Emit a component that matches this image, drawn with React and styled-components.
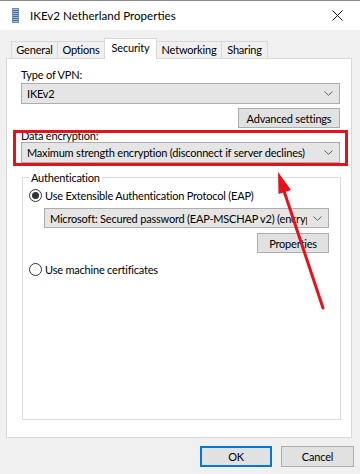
import React from "react";
import styled, { createGlobalStyle } from "styled-components";

const Global = createGlobalStyle`
  html, body { margin: 0; padding: 0; }
  body {
    background: #f0f0f0;
    font-family: Lato, "Noto Sans", sans-serif;
    font-size: 11px;
    letter-spacing: -0.2px;
    color: #000;
  }
`;

const Window = styled.div`
  position: relative;
  width: 360px;
  height: 474px;
  display: flex;
  flex-direction: column;
  background: #f0f0f0;
  overflow: hidden;
`;

const TitleBar = styled.div`
  height: 29px;
  border-top: 1px solid #8c8c8c;
  background: #fff;
  display: flex;
  align-items: center;
  padding-left: 12px;
  gap: 11px;
`;

const TitleText = styled.div`
  flex: 1;
  font-size: 11.6px;
  letter-spacing: 0;
  line-height: 16px;
`;

const CloseBtn = styled.div`
  width: 46px;
  height: 29px;
  display: flex;
  align-items: center;
  justify-content: center;
`;

const Body = styled.div`
  padding: 8px 8px 0 6px;
  display: flex;
  flex-direction: column;
`;

const TabStrip = styled.div`
  display: flex;
  align-items: flex-end;
  padding-left: 5px;
  position: relative;
  z-index: 1;
`;

const Tab = styled.div`
  box-sizing: border-box;
  width: ${(p) => p.$w}px;
  height: ${(p) => (p.$active ? 21 : 17)}px;
  margin-left: -1px;
  margin-bottom: ${(p) => (p.$active ? -1 : 0)}px;
  border: 1px solid #d9d9d9;
  border-bottom: none;
  background: ${(p) => (p.$active ? "#fff" : "#f0f0f0")};
  display: flex;
  align-items: center;
  justify-content: center;
  padding-bottom: ${(p) => (p.$active ? 3 : 0)}px;
  line-height: 14px;
  &:first-child { margin-left: 0; }
`;

const Panel = styled.div`
  position: relative;
  box-sizing: border-box;
  height: 380px;
  background: #fff;
  border: 1px solid #d9d9d9;
  padding: 8px 11px 0 14px;
  display: flex;
  flex-direction: column;
`;

const Label = styled.div`
  line-height: 15px;
  height: ${(p) => p.$h || 15}px;
  margin-bottom: ${(p) => (p.$mb === undefined ? 1 : p.$mb)}px;
`;

const Select = styled.div`
  box-sizing: border-box;
  height: ${(p) => p.$h || 21}px;
  background: #e5e5e5;
  border: 1px solid #adadad;
  display: flex;
  align-items: center;
  padding: 0 6px 0 5px;
  gap: 6px;
  margin-left: ${(p) => p.$ml || 0}px;
  margin-top: ${(p) => p.$mt || 0}px;
  min-width: 0;
`;

const SelectText = styled.span`
  flex: 1;
  min-width: 0;
  white-space: nowrap;
  overflow: hidden;
  line-height: 15px;
`;

const Button = styled.div`
  box-sizing: border-box;
  align-self: flex-end;
  width: ${(p) => p.$w}px;
  height: ${(p) => p.$h || 21}px;
  margin-top: ${(p) => p.$mt || 0}px;
  background: #e1e1e1;
  border: ${(p) => (p.$default ? "2px solid #0078d7" : "1px solid #adadad")};
  display: flex;
  align-items: center;
  justify-content: center;
  line-height: 15px;
`;

const Group = styled.fieldset`
  box-sizing: border-box;
  min-width: 0;
  margin: 7px -1px 0 1px;
  height: 250px;
  border: 1px solid #dcdcdc;
  padding: 3px 11px 0 6px;
  display: flex;
  flex-direction: column;
`;

const Legend = styled.legend`
  padding: 0 2px;
  margin-left: 0;
  line-height: 15px;
`;

const RadioRow = styled.div`
  display: flex;
  align-items: center;
  gap: 3px;
  line-height: 15px;
  margin-top: ${(p) => p.$mt || 0}px;
`;

const RadioCircle = styled.span`
  box-sizing: border-box;
  width: 13px;
  height: 13px;
  border-radius: 50%;
  border: 1px solid #333;
  background: #fff;
  display: flex;
  align-items: center;
  justify-content: center;
  &::after {
    content: "";
    width: 7px;
    height: 7px;
    border-radius: 50%;
    background: #333;
    display: ${(p) => (p.$checked ? "block" : "none")};
  }
`;

const Highlight = styled.div`
  position: absolute;
  left: 6px;
  top: 71px;
  width: 335px;
  height: 36px;
  box-sizing: border-box;
  border: 3px solid #e5121b;
  pointer-events: none;
`;

const ArrowLayer = styled.svg`
  position: absolute;
  left: 0;
  top: 0;
  pointer-events: none;
`;

const Footer = styled.div`
  display: flex;
  justify-content: flex-end;
  gap: 9px;
  padding: 8px 6px 0 0;
`;

const Chevron = () => (
  <svg width="9" height="5" viewBox="0 0 9 5">
    <path d="M0.5 0.5 L4.5 4.3 L8.5 0.5" fill="none" stroke="#606060" strokeWidth="1" />
  </svg>
);

const DialIcon = () => (
  <svg width="7" height="15" viewBox="0 0 7 15">
    <rect x="0" y="0" width="7" height="15" fill="#6f8fb4" />
    <rect x="1" y="1" width="5" height="13" fill="#9fb8d6" />
    {[2, 4, 6, 8, 10, 12].map((y) => (
      <rect key={y} x="1" y={y} width="5" height="1" fill="#4e6f99" />
    ))}
  </svg>
);

const CloseIcon = () => (
  <svg width="11" height="11" viewBox="0 0 11 11">
    <path d="M0.5 0.5 L10.5 10.5 M10.5 0.5 L0.5 10.5" stroke="#111" strokeWidth="1" />
  </svg>
);

const tabs = [
  ["General", 47],
  ["Options", 48],
  ["Security", 53],
  ["Networking", 66],
  ["Sharing", 47],
];

export default function App() {
  return (
    <Window>
      <Global />
      <TitleBar>
        <DialIcon />
        <TitleText>IKEv2 Netherland Properties</TitleText>
        <CloseBtn>
          <CloseIcon />
        </CloseBtn>
      </TitleBar>
      <Body>
        <TabStrip>
          {tabs.map(([t, w]) => (
            <Tab key={t} $w={w} $active={t === "Security"}>
              {t}
            </Tab>
          ))}
        </TabStrip>
        <Panel>
          <Label>Type of VPN:</Label>
          <Select>
            <SelectText>IKEv2</SelectText>
            <Chevron />
          </Select>
          <Button $w={102} $mt={4} $h={20}>Advanced settings</Button>
          <Label $mb={0} $h={14}>Data encryption:</Label>
          <Select>
            <SelectText>Maximum strength encryption (disconnect if server declines)</SelectText>
            <Chevron />
          </Select>
          <Group>
            <Legend>Authentication</Legend>
            <RadioRow>
              <RadioCircle $checked />
              <span>Use Extensible Authentication Protocol (EAP)</span>
            </RadioRow>
            <Select $ml={15} $h={20} $mt={5}>
              <SelectText>Microsoft: Secured password (EAP-MSCHAP v2) (encryption enabled)</SelectText>
              <Chevron />
            </Select>
            <Button $w={72} $mt={5} $h={20}>Properties</Button>
            <RadioRow $mt={9}>
              <RadioCircle />
              <span>Use machine certificates</span>
            </RadioRow>
          </Group>
          <Highlight />
        </Panel>
      </Body>
      <Footer>
        <Button $w={72} $default>OK</Button>
        <Button $w={73}>Cancel</Button>
      </Footer>
      <ArrowLayer width="360" height="474" viewBox="0 0 360 474">
        <line x1="323" y1="308" x2="284" y2="191" stroke="#e5121b" strokeWidth="3" strokeLinecap="round" />
        <polygon points="278,172 291,190 278.5,194" fill="#e5121b" />
      </ArrowLayer>
    </Window>
  );
}
